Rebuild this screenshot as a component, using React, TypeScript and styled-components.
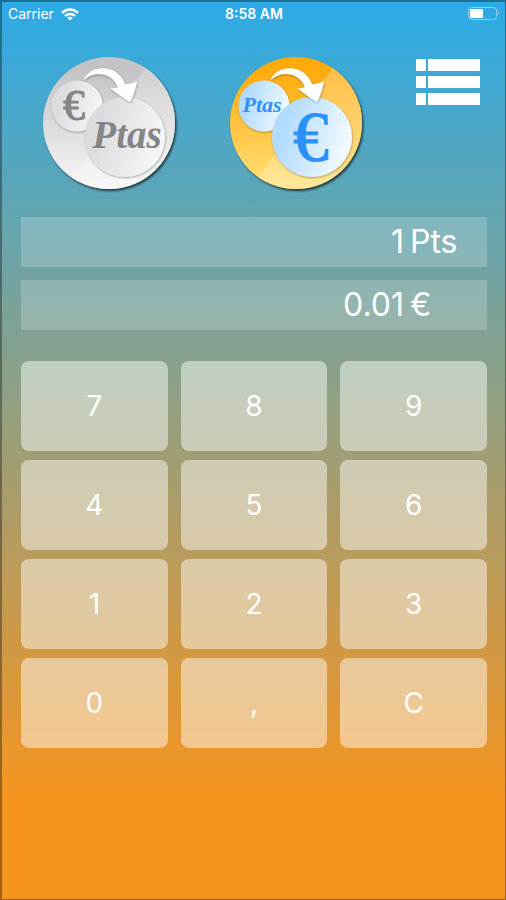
import React, { useState } from "react";
import styled, { createGlobalStyle } from "styled-components";

const GlobalStyle = createGlobalStyle`
  *, *::before, *::after { box-sizing: border-box; }
  body { margin: 0; }
`;

const Screen = styled.main`
  display: flex;
  flex-direction: column;
  min-height: 100vh;
  border: 2px solid rgba(0, 0, 0, 0.34);
  border-right-width: 1px;
  border-bottom-width: 1px;
  background: linear-gradient(to bottom, #2babe7 0%, #f7941e 89%) border-box;
  color: #fff;
  font-family: Inter, "Liberation Sans", sans-serif;
`;

const StatusBar = styled.header`
  display: grid;
  grid-template-columns: 1fr auto 1fr;
  align-items: center;
  height: 24px;
  padding: 0 5px 0 6px;
  font-size: 14px;
  line-height: 16px;
`;

const Carrier = styled.span`
  display: flex;
  align-items: center;
  gap: 7px;
`;

const Clock = styled.time`
  font-weight: 600;
`;

const Battery = styled.svg`
  justify-self: end;
`;

const Toolbar = styled.div`
  display: flex;
  justify-content: space-between;
  align-items: flex-start;
  padding: 31px 25px 0 39px;
`;

const Modes = styled.div`
  display: flex;
  gap: 49px;
`;

const PlainButton = styled.button`
  display: block;
  padding: 0;
  border: 0;
  background: none;
  color: inherit;
  cursor: pointer;

  svg { display: block; overflow: visible; }
`;

const MenuButton = styled(PlainButton)`
  margin-top: 2px;
`;

const Displays = styled.section`
  display: flex;
  flex-direction: column;
  gap: 13px;
  padding: 26px 18px 0 19px;
`;

const Display = styled.output`
  display: grid;
  grid-template-columns: 1fr 77px;
  column-gap: 6px;
  align-items: center;
  height: 50px;
  background: rgba(255, 255, 255, 0.2);
  font-size: 32px;
  line-height: 40px;
`;

const Amount = styled.span`
  text-align: right;
`;

const Keypad = styled.section`
  display: grid;
  grid-template-columns: repeat(3, 1fr);
  grid-auto-rows: 90px;
  gap: 9px 13px;
  padding: 31px 18px 24px 19px;
`;

const Key = styled.button`
  padding: 0;
  border: 0;
  border-radius: 8px;
  background: rgba(255, 255, 255, 0.47);
  color: #fff;
  font-family: inherit;
  font-size: 28px;
  line-height: 36px;
  cursor: pointer;
`;

interface Palette {
  id: string;
  top: string;
  bottom: string;
  coinFrom: string;
  coinTo: string;
  ink: string;
  small: "€" | "Ptas";
}

const GREY: Palette = {
  id: "grey",
  top: "#c3c3c5",
  bottom: "#f7f7f7",
  coinFrom: "#dcdcde",
  coinTo: "#f6f6f6",
  ink: "#858587",
  small: "€",
};

const GOLD: Palette = {
  id: "gold",
  top: "#ffab0c",
  bottom: "#ffe27c",
  coinFrom: "#b2dcff",
  coinTo: "#f5faff",
  ink: "#2b90fa",
  small: "Ptas",
};

function CoinIcon({ palette: p }: { palette: Palette }) {
  const serif = '"Liberation Serif", serif';
  const euroFirst = p.small === "€";
  return (
    <svg width="138" height="134" viewBox="0 0 138 134" aria-hidden="true">
      <defs>
        <linearGradient id={`${p.id}-disc`} x1="0" y1="0" x2="0" y2="1">
          <stop offset="0.1" stopColor={p.top} />
          <stop offset="1" stopColor={p.bottom} />
        </linearGradient>
        <linearGradient id={`${p.id}-coin`} x1="0" y1="0.2" x2="1" y2="0.5">
          <stop offset="0.2" stopColor={p.coinFrom} />
          <stop offset="1" stopColor={p.coinTo} />
        </linearGradient>
        <clipPath id={`${p.id}-clip`}>
          <circle cx="68" cy="66" r="66" />
        </clipPath>
        <filter id={`${p.id}-shadow`} x="-20%" y="-20%" width="140%" height="140%">
          <feDropShadow dx="1.5" dy="2" stdDeviation="1.2" floodColor="#000" floodOpacity="0.65" />
        </filter>
        <filter id={`${p.id}-soft`} x="-20%" y="-20%" width="140%" height="140%">
          <feDropShadow dx="0.5" dy="1" stdDeviation="1.3" floodColor="#000" floodOpacity="0.35" />
        </filter>
      </defs>
      <circle cx="68" cy="66" r="66" fill={`url(#${p.id}-disc)`} filter={`url(#${p.id}-shadow)`} />
      <g clipPath={`url(#${p.id}-clip)`}>
        <path d="M105 10 L30 122 L60 140 H140 V10 Z" fill="#fff" opacity="0.24" />
      </g>
      <circle cx="36" cy="49" r="25.5" fill={`url(#${p.id}-coin)`} filter={`url(#${p.id}-soft)`} />
      <circle cx="84" cy="80" r="40" fill={`url(#${p.id}-coin)`} filter={`url(#${p.id}-soft)`} />
      <path
        d="M43 22 C50 8 76 6 84 27 Q90 28 96 24 Q94 36 89 45 Q79 39 69 31 Q74 32 77 30 C71 16 54 13 43 23 Z"
        fill="#fff"
        filter={`url(#${p.id}-soft)`}
      />
      <g fill={p.ink} fontFamily={serif} textAnchor="middle">
        {euroFirst ? (
          <>
            <text x="33" y="63" fontSize="44" stroke={p.ink} strokeWidth="1">€</text>
            <text x="86" y="91" fontSize="39" fontWeight="700" fontStyle="italic">Ptas</text>
          </>
        ) : (
          <>
            <text x="34" y="55" fontSize="22" fontWeight="700" fontStyle="italic">Ptas</text>
            <text x="83" y="104" fontSize="72" stroke={p.ink} strokeWidth="1">€</text>
          </>
        )}
      </g>
    </svg>
  );
}

const KEYS = ["7", "8", "9", "4", "5", "6", "1", "2", "3", "0", ",", "C"];
const RATE = 166.386;

export default function App() {
  const [entry, setEntry] = useState("1");
  const [toEuro, setToEuro] = useState(true);

  const press = (key: string) => {
    setEntry((now) => {
      if (key === "C") return "0";
      if (key === ",") return now.includes(".") ? now : now + ".";
      return now === "0" ? key : now + key;
    });
  };

  const value = Number(entry);
  const result = (toEuro ? value / RATE : value * RATE).toFixed(2);

  return (
    <>
      <GlobalStyle />
      <Screen>
        <StatusBar>
          <Carrier>
            Carrier
            <svg width="18" height="13" viewBox="0 0 18 13" fill="none" stroke="#fff" strokeWidth="2.4" aria-hidden="true">
              <path d="M1 4.8 C5.5 0.4 12.5 0.4 17 4.8" />
              <path d="M4 8 C6.8 5.3 11.2 5.3 14 8" />
              <path d="M9 12.6 L6.2 9.8 Q9 7.6 11.8 9.8 Z" fill="#fff" stroke="none" />
            </svg>
          </Carrier>
          <Clock>8:58 AM</Clock>
          <Battery width="32" height="14" viewBox="0 0 32 14" aria-hidden="true">
            <rect x="0.5" y="0.5" width="28" height="12" rx="3" fill="none" stroke="#fff" strokeOpacity="0.45" />
            <rect x="2" y="2" width="13" height="9" rx="1" fill="#fff" />
            <path d="M30 4.5 Q32 6.5 30 8.5 Z" fill="#fff" fillOpacity="0.5" />
          </Battery>
        </StatusBar>
        <Toolbar>
          <Modes>
            <PlainButton type="button" aria-label="Euro to pesetas" aria-pressed={!toEuro} onClick={() => setToEuro(false)}>
              <CoinIcon palette={GREY} />
            </PlainButton>
            <PlainButton type="button" aria-label="Pesetas to euro" aria-pressed={toEuro} onClick={() => setToEuro(true)}>
              <CoinIcon palette={GOLD} />
            </PlainButton>
          </Modes>
          <MenuButton type="button" aria-label="Menu">
            <svg width="64" height="46" viewBox="0 0 64 46" fill="#fff" aria-hidden="true">
              <path d="M0 0h10v12H0zM12 0h52v12H12zM0 17h10v12H0zM12 17h52v12H12zM0 34h10v12H0zM12 34h52v12H12z" />
            </svg>
          </MenuButton>
        </Toolbar>
        <Displays>
          <Display>
            <Amount>{entry}</Amount>
            <span>{toEuro ? "Pts" : "€"}</span>
          </Display>
          <Display>
            <Amount>{result}</Amount>
            <span>{toEuro ? "€" : "Pts"}</span>
          </Display>
        </Displays>
        <Keypad>
          {KEYS.map((key) => (
            <Key key={key} type="button" onClick={() => press(key)}>
              {key}
            </Key>
          ))}
        </Keypad>
      </Screen>
    </>
  );
}
